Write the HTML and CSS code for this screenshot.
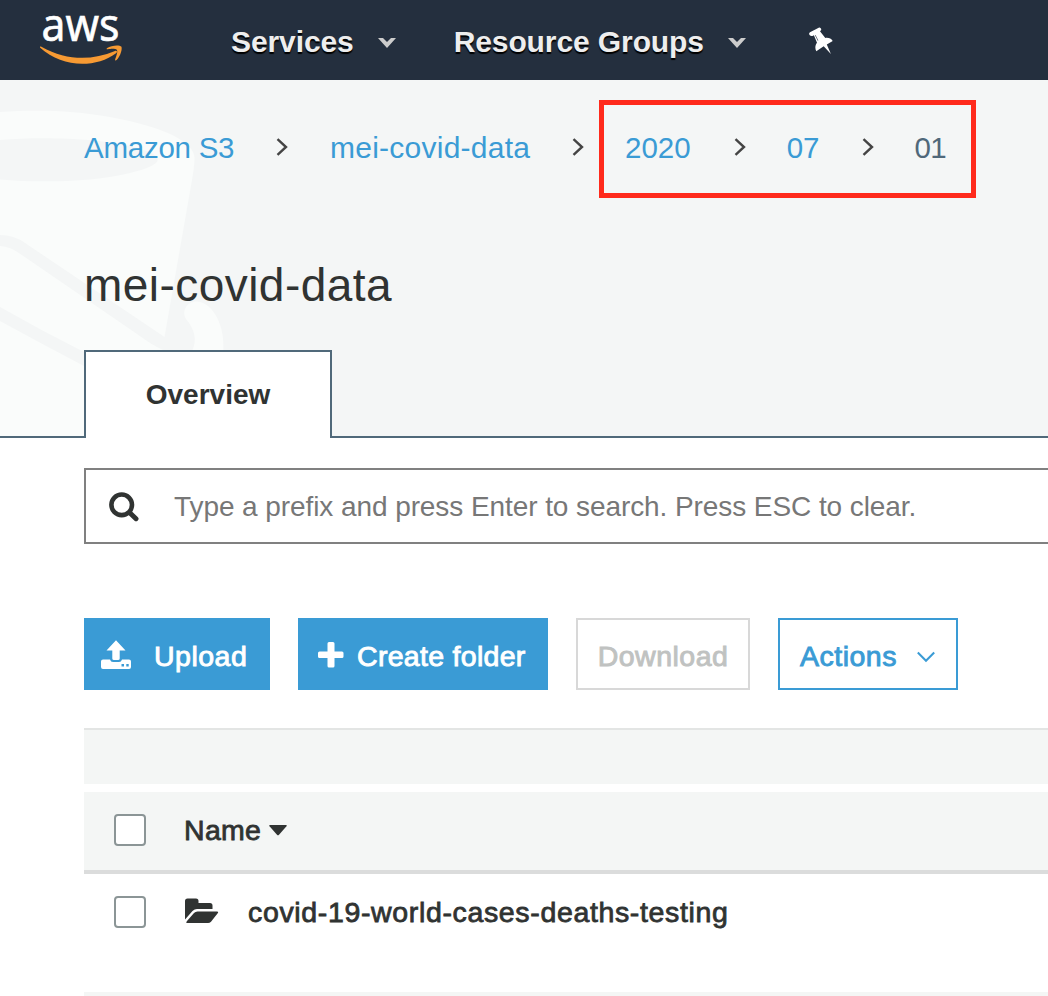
FILE: index.html
```html
<!DOCTYPE html>
<html lang="en">
<head>
<meta charset="utf-8">
<title>S3 Management Console</title>
<link rel="stylesheet" href="styles.css">
</head>
<body>
<header class="topnav">
  <svg class="logo" width="90" height="60" viewBox="0 0 90 60">
    <text class="logo-text" x="2.500" y="33" textLength="78" lengthAdjust="spacingAndGlyphs">aws</text>
    <path fill="#f79a33" d="M1.200 39.800C.4 39 1.200 38 2.400 38.700C28 53 53 52.500 76 43C77.600 42.300 78.800 43.700 77.400 44.900C56 60.800 23 59.500 1.200 39.800Z"/>
    <path fill="#f79a33" d="M69 41.200C67.500 41.700 67.100 40.800 68.200 40C72 37.300 80.500 36.500 82.300 38.600C83.600 40.500 81.500 48.500 77.600 52C76.600 52.900 75.700 52.400 76.200 51.200C77.200 48.600 79 43.600 77.900 42C76.600 40.300 71.500 40.800 69 41.200Z"/>
  </svg>
  <nav class="menu">
    <a class="menu-item">Services
      <svg class="caret" width="20" height="12" viewBox="0 0 20 12"><path d="M1 1h5l4 4 4-4h5l-9 10z"/></svg>
    </a>
    <a class="menu-item">Resource Groups
      <svg class="caret" width="20" height="12" viewBox="0 0 20 12"><path d="M1 1h5l4 4 4-4h5l-9 10z"/></svg>
    </a>
    <svg class="pin" width="26" height="28" viewBox="0 0 26 28"><path fill="#fff" fill-rule="evenodd" d="M2 5.200L10.700.7C12.500-.1 14.300 2.700 12.500 3.800L12 4.200L17.300 10.900C20.500 10.400 23.300 11.500 24.700 14L18.800 17.500L22.900 27.100L15.700 19.300L8.300 24.300C6.800 21.600 7.100 18 9 15.800L5.900 8.200L4.500 8.900C2 9.900-.2 6.700 2 5.200ZM7 8.300L9.800 13.800L10.300 13.500L7.500 8Z"/></svg>
  </nav>
</header>

<section class="hero">
  <svg class="bucket" width="240" height="356" viewBox="0 0 240 356">
    <path fill="#fafcfb" d="M0 32C35 29.500 72 30 110 37C165 47 194.500 62 194.500 78Q194.500 86 192 100L164.500 257L25 163Q14 155 0 155Z"/>
    <path fill="#f4f6f6" d="M0 60C45 56 100 59 130 66C167 75 167 84 130 93C95 102 40 103 0 99.500Z"/>
    <path fill="#fafcfb" d="M0 166Q11 167 19 173L140 256Q152 265 163 270V310L84 272Q42 251 0 227Z"/>
    <path fill="#fafcfb" d="M0 241Q42 264 84 286V356H0Z"/>
    <path fill="#fafcfb" d="M186 239C181 230 188 221 197 221.500C214 223 225 247 223.300 270H192.500C197 260 195 250 186 239Z"/>
  </svg>
  <div class="crumbs">
    <a class="crumb root">Amazon S3</a>
    <svg class="sep" width="12" height="18" viewBox="0 0 12 18"><path d="M1.500 1.200L10 9l-8.500 7.800"/></svg>
    <a class="crumb bucket-name">mei-covid-data</a>
    <svg class="sep" width="12" height="18" viewBox="0 0 12 18"><path d="M1.500 1.200L10 9l-8.500 7.800"/></svg>
    <div class="highlight">
      <a class="crumb">2020</a>
      <svg class="sep" width="12" height="18" viewBox="0 0 12 18"><path d="M1.500 1.200L10 9l-8.500 7.800"/></svg>
      <a class="crumb">07</a>
      <svg class="sep" width="12" height="18" viewBox="0 0 12 18"><path d="M1.500 1.200L10 9l-8.500 7.800"/></svg>
      <span class="crumb current">01</span>
    </div>
  </div>
  <h1 class="title">mei-covid-data</h1>
  <div class="tabs">
    <div class="tab-edge-left"></div>
    <div class="tab">Overview</div>
    <div class="tab-edge-right"></div>
  </div>
</section>

<main class="content">
  <div class="search">
    <svg width="32" height="32" viewBox="0 0 32 32" fill="none" stroke="#303332"><circle cx="13.700" cy="14.800" r="10.300" stroke-width="4.600"/><path stroke-width="5" stroke-linecap="round" d="M22 23l6 5.700"/></svg>
    <span class="placeholder">Type a prefix and press Enter to search. Press ESC to clear.</span>
  </div>

  <div class="actions">
    <button class="btn primary upload">
      <svg width="30" height="30" viewBox="0 0 30 30"><path fill="#fff" fill-rule="evenodd" d="M15 .3L24.500 10.500H18.700V18.500Q18.700 20 17 20H13Q11.300 20 11.300 18.500V10.500H5.500ZM2 19.500H9Q9.700 22 12 22H18Q20.300 22 21 19.500H28Q30 19.500 30 21.500V27Q30 29 28 29H2Q0 29 0 27V21.500Q0 19.500 2 19.500ZM20.500 24V26.500H23V24ZM25.300 24V26.500H27.700V24Z"/></svg>
      <span>Upload</span>
    </button>
    <button class="btn primary create">
      <svg width="26" height="26" viewBox="0 0 26 26"><path fill="#fff" d="M11 0H15Q16.500 0 16.500 1.500V9.500H24Q25.500 9.500 25.500 11V14.500Q25.500 16 24 16H16.500V24Q16.500 25.500 15 25.500H11Q9.500 25.500 9.500 24V16H1.500Q0 16 0 14.500V11Q0 9.500 1.500 9.500H9.500V1.500Q9.500 0 11 0Z"/></svg>
      <span>Create folder</span>
    </button>
    <button class="btn disabled">Download</button>
    <button class="btn outline">
      <span>Actions</span>
      <svg width="18" height="12" viewBox="0 0 18 12"><path fill="none" stroke="#3a9bd5" stroke-width="2" d="M.8 1.500L9 9.800l8.200-8.300"/></svg>
    </button>
  </div>

  <div class="table">
    <div class="toolbar"></div>
    <div class="row head">
      <span class="check"></span>
      <span class="name">Name</span>
      <svg class="sort" width="18" height="11" viewBox="0 0 18 11"><path fill="#303332" d="M1 0h16q1.500 0 .5 1.300L10 9.800q-1 1-2 0L.5 1.300Q-.5 0 1 0z"/></svg>
    </div>
    <div class="row">
      <span class="check"></span>
      <svg class="folder" width="34" height="26" viewBox="0 0 34 26"><path fill="#303332" d="M0 3Q0 .5 2.500.5H11Q13.500.5 13.500 3V5H25Q27.500 5 27.500 7.500V11H12Q9.500 11 7.500 13L0 21.500ZM12.500 13.500H32Q34 13.500 32.500 15.500L26 23.700Q24.800 25 23 25H2.500Q.3 25 2 23L9 15Q10.300 13.500 12.500 13.500Z"/></svg>
      <span class="object">covid-19-world-cases-deaths-testing</span>
    </div>
    <div class="next-row"></div>
  </div>
</main>
</body>
</html>
```
FILE: styles.css
```css
* { box-sizing: border-box; }
body {
  margin: 0;
  width: 1048px;
  height: 996px;
  overflow: hidden;
  background: #fff;
  color: #303332;
  font-family: "Liberation Sans", Arial, sans-serif;
  font-size: 28px;
  line-height: 34px;
}
svg { display: block; flex: none; }

.topnav {
  display: flex;
  height: 80px;
  padding: 8px 0 0 39px;
  background: #242f3e;
}
.logo { overflow: visible; }
.logo-text { font: 400 45px "Noto Sans", sans-serif; fill: #fff; stroke: #fff; stroke-width: 0.6px; }
.menu {
  display: flex;
  align-items: center;
  height: 68px;
  padding-left: 102px;
}
.menu-item {
  display: flex;
  align-items: center;
  gap: 23px;
  margin-right: 57px;
  color: #eee;
  font-size: 30px;
  font-weight: 700;
  letter-spacing: -0.1px;
  white-space: nowrap;
  text-shadow: 0 2px 1px #000;
}
.caret { margin-top: 1px; fill: #ccc; }
.pin { margin: -3px 0 0 4px; }

.hero {
  position: relative;
  display: flex;
  flex-direction: column;
  height: 358px;
  padding-top: 20px;
  background: #f4f6f6;
}
.bucket { position: absolute; left: 0; top: 0; }
.crumbs, .title, .tabs { position: relative; }
.crumbs {
  display: flex;
  align-items: center;
  height: 98px;
  padding-left: 84px;
  white-space: nowrap;
}
.crumb { color: #3a9bd5; font-size: 29.5px; margin-top: -2px; }
.root { width: 151px; letter-spacing: -0.25px; }
.bucket-name { width: 202px; padding-left: 1px; font-size: 30px; letter-spacing: 0.25px; }
.sep {
  margin: -4px 41px 0;
  fill: none;
  stroke: #444;
  stroke-width: 2.4;
}
.crumbs > .sep:nth-of-type(2) { margin-right: 15px; }
.highlight {
  display: flex;
  align-items: center;
  width: 377px;
  height: 98px;
  padding-left: 21px;
  border: 5px solid #ff2a1c;
}
.highlight .sep { margin: -4px 41px 0 43px; }
.current { color: #50687a; }
.highlight .current { margin-left: -1px; letter-spacing: -0.6px; }
.title {
  margin: 59px 0 0 84px;
  font-size: 46px;
  font-weight: 400;
  line-height: 56px;
  letter-spacing: 0.45px;
}
.tabs {
  display: flex;
  align-items: flex-end;
  height: 88px;
  margin-top: auto;
}
.tab-edge-left, .tab-edge-right { height: 2px; background: #50697a; }
.tab-edge-left { width: 84px; }
.tab-edge-right { flex: 1; }
.tab {
  width: 248px;
  height: 88px;
  padding-top: 26px;
  border: 2px solid #50697a;
  border-bottom: 0;
  background: #fff;
  font-weight: 700;
  text-align: center;
}

.content { padding: 30px 0 0 84px; }
.search {
  display: flex;
  align-items: center;
  height: 76px;
  padding-left: 22px;
  gap: 34px;
  border: 2px solid #808080;
  border-right: 0;
}
.placeholder { padding-top: 2px; color: #777; letter-spacing: -0.08px; white-space: nowrap; }

.actions { display: flex; gap: 28px; margin: 74px 0 38px; }
.btn {
  display: flex;
  align-items: center;
  height: 72px;
  padding: 4px 0 0;
  border: 2px solid #3a9bd5;
  font: 28.5px/34px "Liberation Sans", Arial, sans-serif;
  white-space: nowrap;
  -webkit-text-stroke: 0.9px currentColor;
}
.primary { background: #3a9bd5; color: #fff; }
.upload { width: 186px; padding-left: 15px; gap: 23px; letter-spacing: 0.5px; }
.create { width: 250px; padding-left: 18px; gap: 13px; letter-spacing: 0.3px; }
.upload svg { margin-top: -2px; }
.create svg { margin-top: -2px; }
.disabled {
  width: 174px;
  justify-content: center;
  background: #fff;
  border-color: #d8d8d8;
  color: #c0c2c1;
  letter-spacing: 0.5px;
}
.outline {
  width: 180px;
  padding-left: 20px;
  gap: 20px;
  background: #fff;
  color: #3a9bd5;
  letter-spacing: 0.5px;
}
.outline svg { margin-top: 2px; }

.toolbar {
  height: 56px;
  margin-bottom: 8px;
  border-top: 2px solid #e3e5e4;
  background: #f4f6f5;
}
.row { display: flex; align-items: center; height: 76px; padding-left: 30px; margin-bottom: 42px; }
.head {
  height: 82px;
  margin-bottom: 0;
  background: #f4f6f5;
  border-bottom: 4px solid #dbdcdc;
}
.head .check { margin-top: -2px; }
.check {
  width: 32px;
  height: 32px;
  margin-right: 38px;
  border: 2px solid #8b9596;
  border-radius: 4px;
  background: #fff;
}
.name, .object {
  margin-top: -2px;
  font-size: 28.5px;
  letter-spacing: 0.3px;
  white-space: nowrap;
  -webkit-text-stroke: 0.8px currentColor;
}
.sort { margin: -1px 0 0 8px; }
.folder { margin: -2px 29px 0 1px; }
.object { margin-top: 0; letter-spacing: 0.65px; }
.next-row { height: 4px; background: #f4f6f5; }
```
